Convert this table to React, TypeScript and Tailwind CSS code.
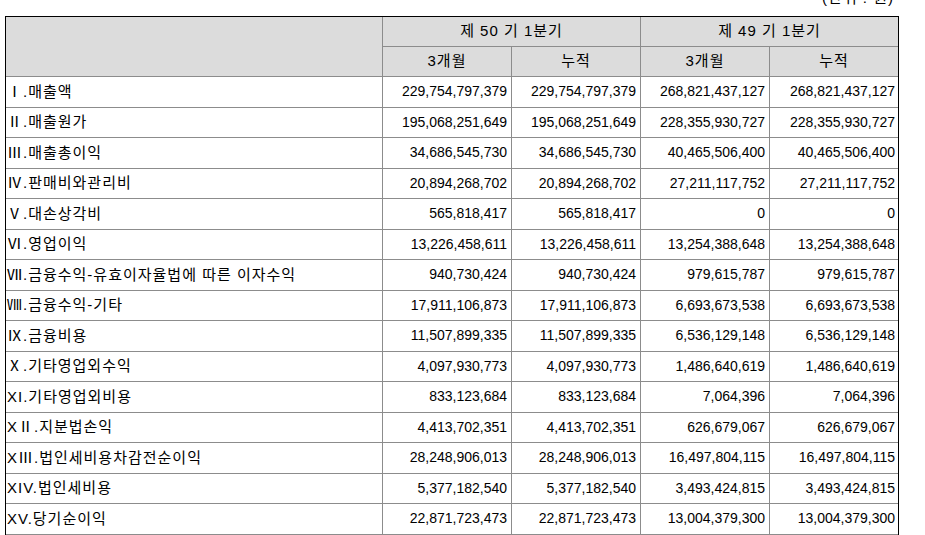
const rows: [string, string, string][] = [
  ["Ⅰ.매출액", "229,754,797,379", "268,821,437,127"],
  ["Ⅱ.매출원가", "195,068,251,649", "228,355,930,727"],
  ["Ⅲ.매출총이익", "34,686,545,730", "40,465,506,400"],
  ["Ⅳ.판매비와관리비", "20,894,268,702", "27,211,117,752"],
  ["Ⅴ.대손상각비", "565,818,417", "0"],
  ["Ⅵ.영업이익", "13,226,458,611", "13,254,388,648"],
  ["Ⅶ.금융수익-유효이자율법에 따른 이자수익", "940,730,424", "979,615,787"],
  ["Ⅷ.금융수익-기타", "17,911,106,873", "6,693,673,538"],
  ["Ⅸ.금융비용", "11,507,899,335", "6,536,129,148"],
  ["Ⅹ.기타영업외수익", "4,097,930,773", "1,486,640,619"],
  ["XI.기타영업외비용", "833,123,684", "7,064,396"],
  ["XⅡ.지분법손익", "4,413,702,351", "626,679,067"],
  ["XⅢ.법인세비용차감전순이익", "28,248,906,013", "16,497,804,115"],
  ["XIV.법인세비용", "5,377,182,540", "3,493,424,815"],
  ["XV.당기순이익", "22,871,723,473", "13,004,379,300"],
];

function Num({ value, last }: { value: string; last?: boolean }) {
  return (
    <div
      className={
        last
          ? "flex w-[128px] items-center justify-end pr-[3px]"
          : "flex w-[129px] items-center justify-end border-r border-[#8c8c8c] pr-[4px]"
      }
    >
      {value}
    </div>
  );
}

export default function App() {
  return (
    <div
      className="h-[535px] w-[925px] overflow-hidden bg-white text-[14px] text-black"
      style={{ fontFamily: "'Liberation Sans', 'Noto Sans CJK KR', sans-serif" }}
    >
      <div className="-mt-[10px] h-[26px] pr-[31px] text-right text-[15px] leading-[16px] tracking-[1px]">
        (단위 : 원)
      </div>

      <div className="ml-[5px] w-[894px] border border-black">
        {/* header */}
        <div className="flex border-b border-[#8c8c8c] bg-[#dcdcdc] text-[15px] tracking-[1px]">
          <div className="w-[377px] border-r border-[#8c8c8c]" />
          <div className="flex flex-1 flex-col">
            <div className="flex h-[30px] border-b border-[#8c8c8c]">
              <div className="flex w-[258px] items-center justify-center border-r border-[#8c8c8c]">
                제 50 기 1분기
              </div>
              <div className="flex flex-1 items-center justify-center">제 49 기 1분기</div>
            </div>
            <div className="flex h-[29px]">
              <div className="flex w-[129px] items-center justify-center border-r border-[#8c8c8c]">3개월</div>
              <div className="flex w-[129px] items-center justify-center border-r border-[#8c8c8c]">누적</div>
              <div className="flex w-[129px] items-center justify-center border-r border-[#8c8c8c]">3개월</div>
              <div className="flex flex-1 items-center justify-center">누적</div>
            </div>
          </div>
        </div>

        {/* body */}
        {rows.map(([label, cur, prev]) => (
          <div key={label} className="flex h-[30.5px] border-b border-[#8c8c8c]">
            <div className="flex w-[377px] items-center border-r border-[#8c8c8c] pl-[1px] text-[15px] tracking-[1px]">
              {label}
            </div>
            <Num value={cur} />
            <Num value={cur} />
            <Num value={prev} />
            <Num value={prev} last />
          </div>
        ))}
      </div>
    </div>
  );
}
